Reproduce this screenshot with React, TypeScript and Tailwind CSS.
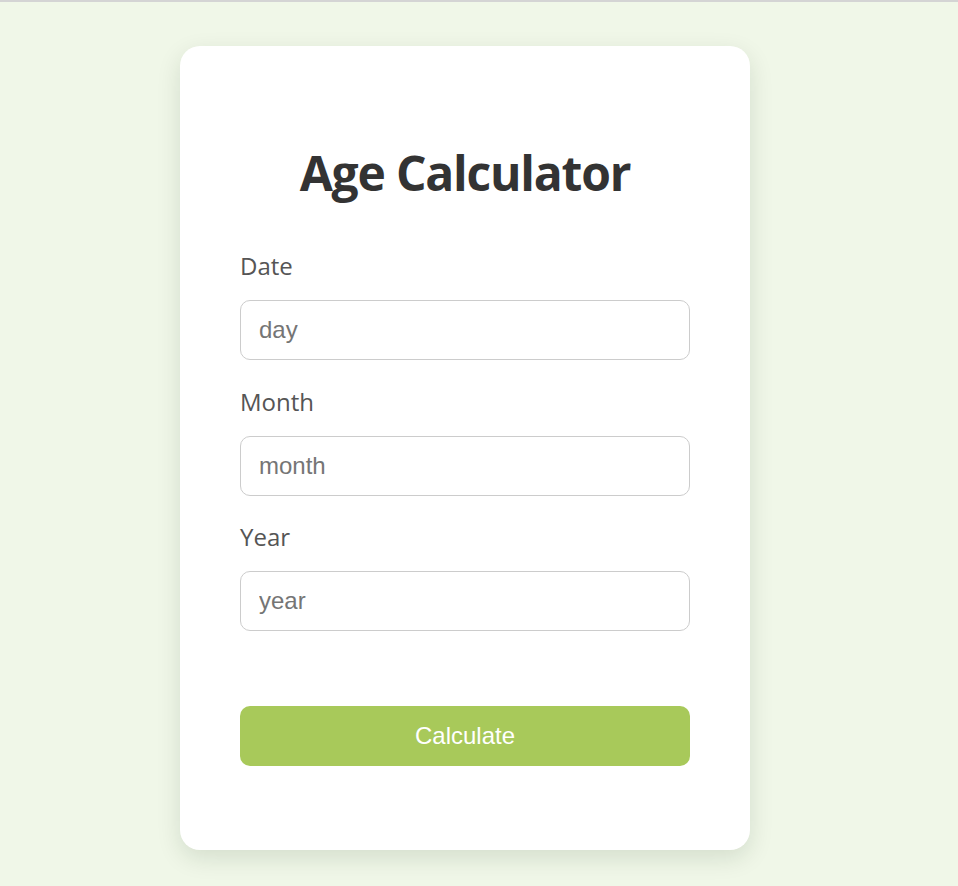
export default function App() {
  const fields = [
    { label: 'Date', placeholder: 'day' },
    { label: 'Month', placeholder: 'month' },
    { label: 'Year', placeholder: 'year' },
  ]

  return (
    <div className="min-h-screen bg-[#f0f7e8] border-t-2 border-[#d4d4d4]">
      <div className="flex pl-[180px] pt-[44px] pb-10">
        <div className="w-[570px] bg-white rounded-[20px] shadow-[0_8px_24px_rgba(0,40,0,0.12)] px-[60px] pt-[98px] pb-[84px]">
          <h1 className="text-center text-[48px] leading-[58px] font-bold text-[#333] font-['Open_Sans',sans-serif] tracking-[-1.2px]">
            Age Calculator
          </h1>
          <div className="mt-[49px] flex flex-col">
            {fields.map((f, i) => (
              <div key={f.label} className={i > 0 ? 'mt-[26.5px]' : ''}>
                <label className="block text-[24px] leading-[29px] text-[#555] font-['Open_Sans',sans-serif]">
                  {f.label}
                </label>
                <input
                  type="text"
                  placeholder={f.placeholder}
                  className="mt-[20px] block w-full h-[60px] rounded-[10px] border border-[#ccc] px-[18px] text-[24px] font-['Liberation_Sans',Arial,sans-serif] text-[#333] placeholder:text-[#757575] outline-none"
                />
              </div>
            ))}
          </div>
          <button className="mt-[75px] w-full h-[60px] rounded-[10px] bg-[#a8c95a] text-white text-[24px] font-['Liberation_Sans',Arial,sans-serif]">
            Calculate
          </button>
        </div>
      </div>
    </div>
  )
}
